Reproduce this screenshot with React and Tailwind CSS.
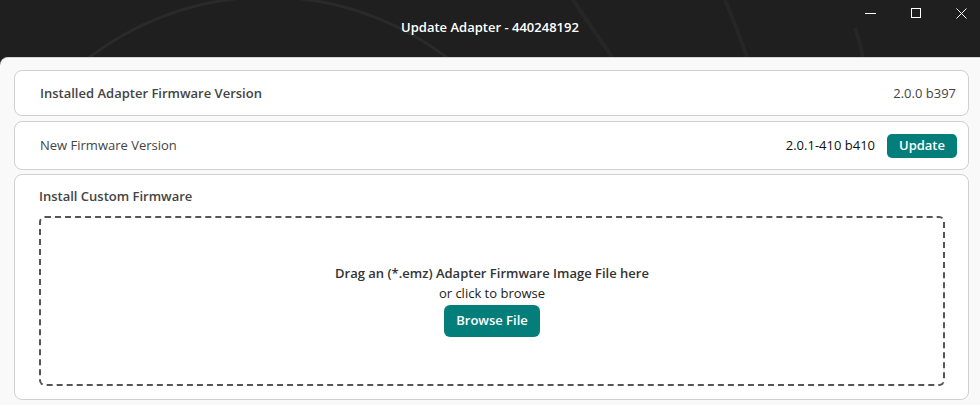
const font = { fontFamily: '"Open Sans", "Noto Sans", sans-serif' };

const TitleBar = () => {
  return (
    <div className="relative h-[57px] bg-[#1f1f1f] flex items-center justify-center overflow-hidden">
      <svg className="absolute inset-0" width="980" height="57" viewBox="0 0 980 57" fill="none">
        <circle cx="268" cy="291" r="294" stroke="#2a2a2a" strokeWidth="3" />
        <path d="M573 0 Q592 28 612 57" stroke="#262626" strokeWidth="4" />
        <path d="M725 0 Q737 28 747 57" stroke="#262626" strokeWidth="4" />
        <path d="M855 28 Q860 42 863 57" stroke="#262626" strokeWidth="4" />
      </svg>
      <p className="relative text-white text-[13px] font-semibold mt-[-2px]">Update Adapter - 440248192</p>
      <svg className="absolute left-0 top-0" width="980" height="26" viewBox="0 0 980 26" fill="none" stroke="#ffffff" strokeWidth="1">
        <path d="M865 13.5 H876" />
        <rect x="911.5" y="8.5" width="9" height="9" />
        <path d="M956.5 8.5 L966.5 18.5 M966.5 8.5 L956.5 18.5" />
      </svg>
    </div>
  )
}

export default function App() {
  return (
    <div className="w-[980px] h-[405px] bg-[#1f1f1f] overflow-hidden" style={font}>
      <TitleBar />
      <div className="h-[348px] bg-[#f9f9f9] rounded-tl-[8px] border-t border-[#d6d6d6] pl-[14px] pr-[11px] pt-[12px] flex flex-col">
        <div className="h-[46px] bg-white border border-[#d0d0d0] rounded-[8px] flex items-center justify-between pl-[25px] pr-[12px]">
          <p className="text-[13px] font-semibold text-[#444] mt-[1px]">Installed Adapter Firmware Version</p>
          <p className="text-[13px] text-[#444] mt-[1px]">2.0.0 b397</p>
        </div>
        <div className="mt-[5px] h-[49px] bg-white border border-[#d0d0d0] rounded-[8px] flex items-center justify-between pl-[25px] pr-[11px]">
          <p className="text-[13px] text-[#444]">New Firmware Version</p>
          <div className="flex items-center gap-[12px]">
            <p className="text-[13px] text-[#111]">2.0.1-410 b410</p>
            <button className="w-[70px] h-[24px] bg-[#047e7b] text-white text-[13px] font-semibold rounded-[5px]">Update</button>
          </div>
        </div>
        <div className="mt-[4px] h-[226px] bg-white border border-[#d0d0d0] rounded-[8px] pl-[24px] pr-[23px] pt-[11px]">
          <p className="text-[13px] font-semibold text-[#444] leading-[20px]">Install Custom Firmware</p>
          <div className="mt-[10px] h-[170px] border-2 border-dashed border-[#555] rounded-[6px] flex flex-col items-center justify-center">
            <p className="text-[13px] font-semibold text-[#333] leading-[20px] mt-[-2px]">Drag an (*.emz) Adapter Firmware Image File here</p>
            <p className="text-[13px] text-[#222] leading-[20px]">or click to browse</p>
            <button className="mt-[2px] w-[96px] h-[32px] bg-[#047e7b] text-white text-[13px] font-semibold rounded-[6px]">Browse File</button>
          </div>
        </div>
      </div>
    </div>
  )
}
